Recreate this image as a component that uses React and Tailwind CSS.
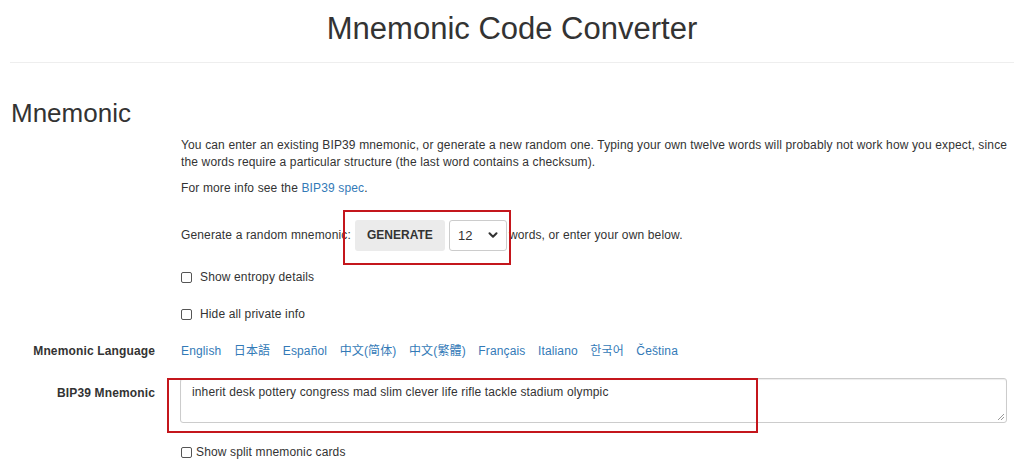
import { ChevronDown } from 'lucide-react';

const languages = ['English', '日本語', 'Español', '中文(简体)', '中文(繁體)', 'Français', 'Italiano', '한국어', 'Čeština'];

function Row({ label, children, className = '', labelClass = '' }) {
  return (
    <div className={`flex ${className}`}>
      <div className={`w-[145px] shrink-0 text-right font-bold ${labelClass}`}>{label}</div>
      <div className="ml-[26px] flex-1">{children}</div>
    </div>
  );
}

function Check({ label, gap = 'ml-[8px]' }) {
  return (
    <label className="flex items-center">
      <span className="inline-block w-[11px] h-[11px] border border-[#555] rounded-[2px] bg-white" />
      <span className={gap}>{label}</span>
    </label>
  );
}

export default function App() {
  return (
    <div
      className="relative w-full h-[471px] overflow-hidden bg-white text-[#333] text-[12px] leading-[17px] tracking-[0.14px]"
      style={{ fontFamily: '"Liberation Sans", Arial, "Noto Sans CJK SC", "Noto Sans CJK JP", "Noto Sans CJK KR", sans-serif' }}
    >
      <div className="px-[10px]">
        <h1 className="pt-[11px] text-center text-[31px] leading-[36px] tracking-normal text-[#333]">Mnemonic Code Converter</h1>
        <hr className="mt-[15px] border-t border-[#eee]" />

        <h2 className="mt-[35px] text-[26px] leading-[30px] tracking-normal pl-[1px]">Mnemonic</h2>

        {/* form */}
        <Row className="mt-[9px]">
          <p>
            You can enter an existing BIP39 mnemonic, or generate a new random one. Typing your own twelve words will probably not work how you expect, since the words require a particular structure (the last word contains a checksum).
          </p>
          <p className="mt-[9px]">
            For more info see the <a className="text-[#337ab7]">BIP39 spec</a>.
          </p>
          <div className="mt-[22px] flex items-center h-[32px]">
            <span>Generate a random mnemonic:</span>
            <button className="ml-[4px] h-[31px] w-[90px] bg-[#ebebeb] rounded-[3px] font-bold text-[#333] tracking-normal">GENERATE</button>
            <div className="ml-[4px] h-[31px] w-[58px] border border-[#ccc] rounded-[3px] flex items-center justify-between pl-[8px] pr-[6px]">
              <span className="text-[13px]">12</span>
              <ChevronDown size={14} strokeWidth={3.5} className="text-[#333]" />
            </div>
            <span className="ml-[2px]">words, or enter your own below.</span>
          </div>
          <div className="mt-[18px]">
            <Check label="Show entropy details" />
          </div>
          <div className="mt-[20px]">
            <Check label="Hide all private info" />
          </div>
        </Row>

        <Row label="Mnemonic Language" className="mt-[20px]">
          <div className="flex gap-[12.5px] text-[#337ab7]">
            {languages.map((l) => (
              <a key={l}>{l}</a>
            ))}
          </div>
        </Row>

        <Row label="BIP39 Mnemonic" className="mt-[18px]" labelClass="pt-[7px]">
          <div className="-ml-[1px] relative h-[45px] w-[827px] border border-[#ccc] rounded-[3px] shadow-[inset_0_1px_1px_rgba(0,0,0,0.075)] pl-[11px] pt-[5px]">
            inherit desk pottery congress mad slim clever life rifle tackle stadium olympic
            <svg className="absolute right-[1px] bottom-[1px]" width="9" height="9" viewBox="0 0 9 9">
              <path d="M8 2 L2 8 M8 5 L5 8" stroke="#999" strokeWidth="1" />
            </svg>
          </div>
        </Row>
        <Row className="mt-[21px]">
          <Check label="Show split mnemonic cards" gap="ml-[4px]" />
        </Row>
      </div>

      {/* annotation boxes */}
      <div className="absolute left-[343px] top-[210px] w-[168px] h-[55px] border-2 border-[#c4161c]" />
      <div className="absolute left-[167px] top-[378px] w-[591px] h-[55px] border-2 border-[#c4161c]" />
    </div>
  );
}
